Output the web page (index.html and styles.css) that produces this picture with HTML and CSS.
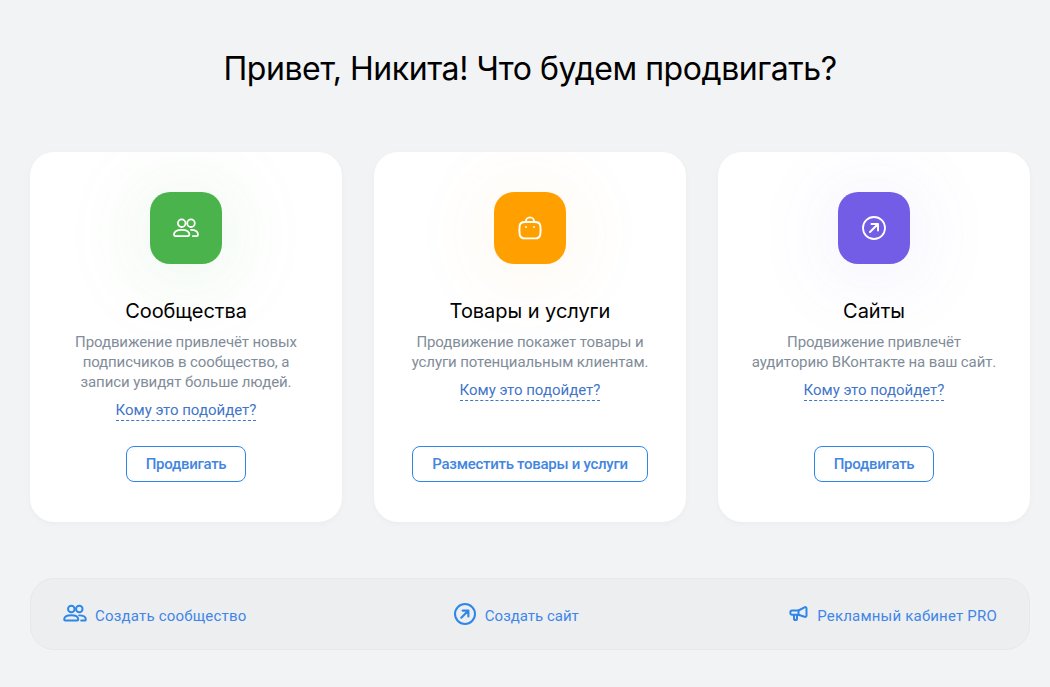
FILE: index.html
```html
<!DOCTYPE html>
<html lang="ru">
<head>
  <meta charset="UTF-8" />
  <title>Что будем продвигать?</title>
  <link rel="stylesheet" href="styles.css">
</head>
<body>
  <h1 class="title">Привет, Никита! Что будем продвигать?</h1>

  <div class="cards">
    <div class="card">
      <div class="card-icon green">
        <svg width="28" height="28" viewBox="0 0 28 28" fill="none" stroke="#fff" stroke-width="1.8" stroke-linecap="round" stroke-linejoin="round">
          <circle cx="9.7" cy="9.2" r="3.8"/>
          <circle cx="19" cy="9.2" r="3.8"/>
          <path d="M2 20.6c0-3.2 3.4-4.8 7.7-4.8s7.700 1.600 7.700 4.800c0 1-.6 1.500-1.400 1.500H3.400c-.8 0-1.400-.5-1.400-1.500z"/>
          <path d="M19 15.800c4 0 7 1.500 7 4.700 0 1-.6 1.600-1.400 1.600h-3.800"/>
        </svg>
      </div>
      <h2 class="card-title">Сообщества</h2>
      <p class="card-text">Продвижение привлечёт новых подписчиков в сообщество, а записи увидят больше людей.</p>
      <a class="who-link">Кому это подойдет?</a>
      <a class="btn">Продвигать</a>
    </div>

    <div class="card">
      <div class="card-icon orange">
        <svg width="28" height="28" viewBox="0 0 28 28" fill="none" stroke="#fff" stroke-width="1.9" stroke-linecap="round" stroke-linejoin="round">
          <path d="M9 8h10c2.800 0 4.900 1 5.300 3.500.3 2 .3 7 0 9-.4 2.600-2.500 3.900-5.300 3.900H9c-2.800 0-4.900-1.300-5.300-3.900-.3-2-.3-7 0-9C4.100 9 6.200 8 9 8z"/>
          <path d="M9.800 8v-.4c0-2.300 1.900-4.200 4.200-4.200s4.200 1.900 4.200 4.200V8"/>
          <path d="M10 13h.01M18 13h.01"/>
        </svg>
      </div>
      <h2 class="card-title">Товары и услуги</h2>
      <p class="card-text">Продвижение покажет товары и услуги потенциальным клиентам.</p>
      <a class="who-link">Кому это подойдет?</a>
      <a class="btn">Разместить товары и услуги</a>
    </div>

    <div class="card">
      <div class="card-icon purple">
        <svg width="28" height="28" viewBox="0 0 28 28" fill="none" stroke="#fff" stroke-width="1.8" stroke-linecap="round" stroke-linejoin="round">
          <circle cx="14" cy="14" r="11"/>
          <path d="M10 18l7.500-7.500M11.500 10h6.500v6.500" stroke-width="2"/>
        </svg>
      </div>
      <h2 class="card-title">Сайты</h2>
      <p class="card-text">Продвижение привлечёт аудиторию ВКонтакте на ваш сайт.</p>
      <a class="who-link">Кому это подойдет?</a>
      <a class="btn">Продвигать</a>
    </div>
  </div>

  <div class="bottom-bar">
    <a class="bottom-link">
      <svg width="24" height="24" viewBox="0 0 28 28" fill="none" stroke="#2f86e8" stroke-width="2.300" stroke-linecap="round" stroke-linejoin="round">
        <circle cx="9.700" cy="8.200" r="3.800"/>
        <circle cx="19" cy="8.200" r="3.800"/>
        <path d="M1.400 20.400c0-3.200 3.800-4.900 8.300-4.900s8.100 1.700 8.100 4.900c0 .8-.5 1.300-1.300 1.300H2.700c-.8 0-1.300-.5-1.300-1.300z"/>
        <path d="M18.800 15.600c4.400 0 7.800 1.600 7.800 4.700 0 .9-.5 1.400-1.300 1.400h-4.100"/>
      </svg>
      <span>Создать сообщество</span>
    </a>
    <a class="bottom-link site-link">
      <svg width="24" height="24" viewBox="0 0 24 24" fill="none" stroke="#2f86e8" stroke-width="2" stroke-linecap="round" stroke-linejoin="round">
        <circle cx="12" cy="12" r="10"/>
        <path d="M8.300 15.700l6.600-6.600M9.600 8.600h5.800v5.800" stroke-width="2.100"/>
      </svg>
      <span>Создать сайт</span>
    </a>
    <a class="bottom-link">
      <svg width="20" height="20" viewBox="0 0 20 20" fill="none" stroke="#2f86e8" stroke-width="2" stroke-linecap="round" stroke-linejoin="round">
        <path d="M3 6.500h6.500L15.500 3.300c1-.5 2 0 2 1.200v7c0 1.200-1 1.700-2 1.200L9.500 10.800H3c-1 0-1.600-.6-1.600-1.600V8.100c0-1 .6-1.600 1.600-1.600z"/>
        <path d="M9.500 6.500v4.300M5 11v3.500c0 1 .6 1.600 1.500 1.600s1.500-.6 1.500-1.600V11"/>
      </svg>
      <span>Рекламный кабинет PRO</span>
    </a>
  </div>
</body>
</html>
```

FILE: styles.css
```css
* {
  margin: 0;
  padding: 0;
  box-sizing: border-box;
}

html, body {
  height: 100%;
}

body {
  background: #f2f3f5;
  padding: 0 20px 0 30px;
  font-family: Roboto, "Liberation Sans", sans-serif;
  overflow: hidden;
}

.title {
  padding-top: 49px;
  height: 152px;
  font-family: Inter, "Noto Sans", sans-serif;
  font-size: 32px;
  line-height: 40px;
  font-weight: 400;
  letter-spacing: -0.45px;
  text-align: center;
  color: #000;
}

.cards {
  display: grid;
  grid-template-columns: repeat(3, 312px);
  gap: 32px;
}

.card {
  height: 370px;
  padding: 40px 30px;
  display: flex;
  flex-direction: column;
  align-items: center;
  background: #fff;
  border-radius: 24px;
  box-shadow: 0 2px 6px rgba(0, 0, 0, 0.03);
  text-align: center;
  overflow: hidden;
}

.card-icon {
  width: 72px;
  height: 72px;
  flex: none;
  display: flex;
  align-items: center;
  justify-content: center;
  border-radius: 20px;
}

.green {
  background: #4bb34b;
  box-shadow: 0 6px 80px 12px rgba(75, 179, 75, 0.1);
}

.orange {
  background: #ffa000;
  box-shadow: 0 6px 80px 12px rgba(255, 160, 0, 0.07);
}

.purple {
  background: #735ce6;
  box-shadow: 0 6px 80px 12px rgba(115, 92, 230, 0.08);
}

.card-title {
  margin-top: 35px;
  font-family: Inter, "Noto Sans", sans-serif;
  font-size: 20px;
  line-height: 24px;
  font-weight: 400;
  letter-spacing: -0.05px;
  color: #000;
}

.card-text {
  margin-top: 9px;
  font-size: 15px;
  line-height: 20px;
  letter-spacing: -0.1px;
  color: #818c99;
}

.who-link {
  margin-top: 9px;
  height: 20px;
  font-size: 15px;
  line-height: 18px;
  color: #3f76c9;
  border-bottom: 1px dashed #3f76c9;
}

.btn {
  margin-top: auto;
  height: 36px;
  padding: 0 19px;
  display: flex;
  align-items: center;
  border: 1px solid #2f86e8;
  border-radius: 8px;
  font-size: 15px;
  font-weight: 500;
  letter-spacing: -0.27px;
  color: #4286e0;
}

.bottom-bar {
  margin-top: 56px;
  height: 72px;
  padding: 0 32px;
  display: flex;
  align-items: center;
  justify-content: space-between;
  background: #edeef0;
  border: 1px solid #e7e8ea;
  border-radius: 24px;
}

.bottom-link {
  display: flex;
  align-items: center;
  gap: 8px;
  font-size: 15px;
  letter-spacing: 0.2px;
  color: #3f86e8;
}

.bottom-link span {
  padding-top: 4px;
}

.site-link {
  margin-right: 4px;
  letter-spacing: 0;
}
```
